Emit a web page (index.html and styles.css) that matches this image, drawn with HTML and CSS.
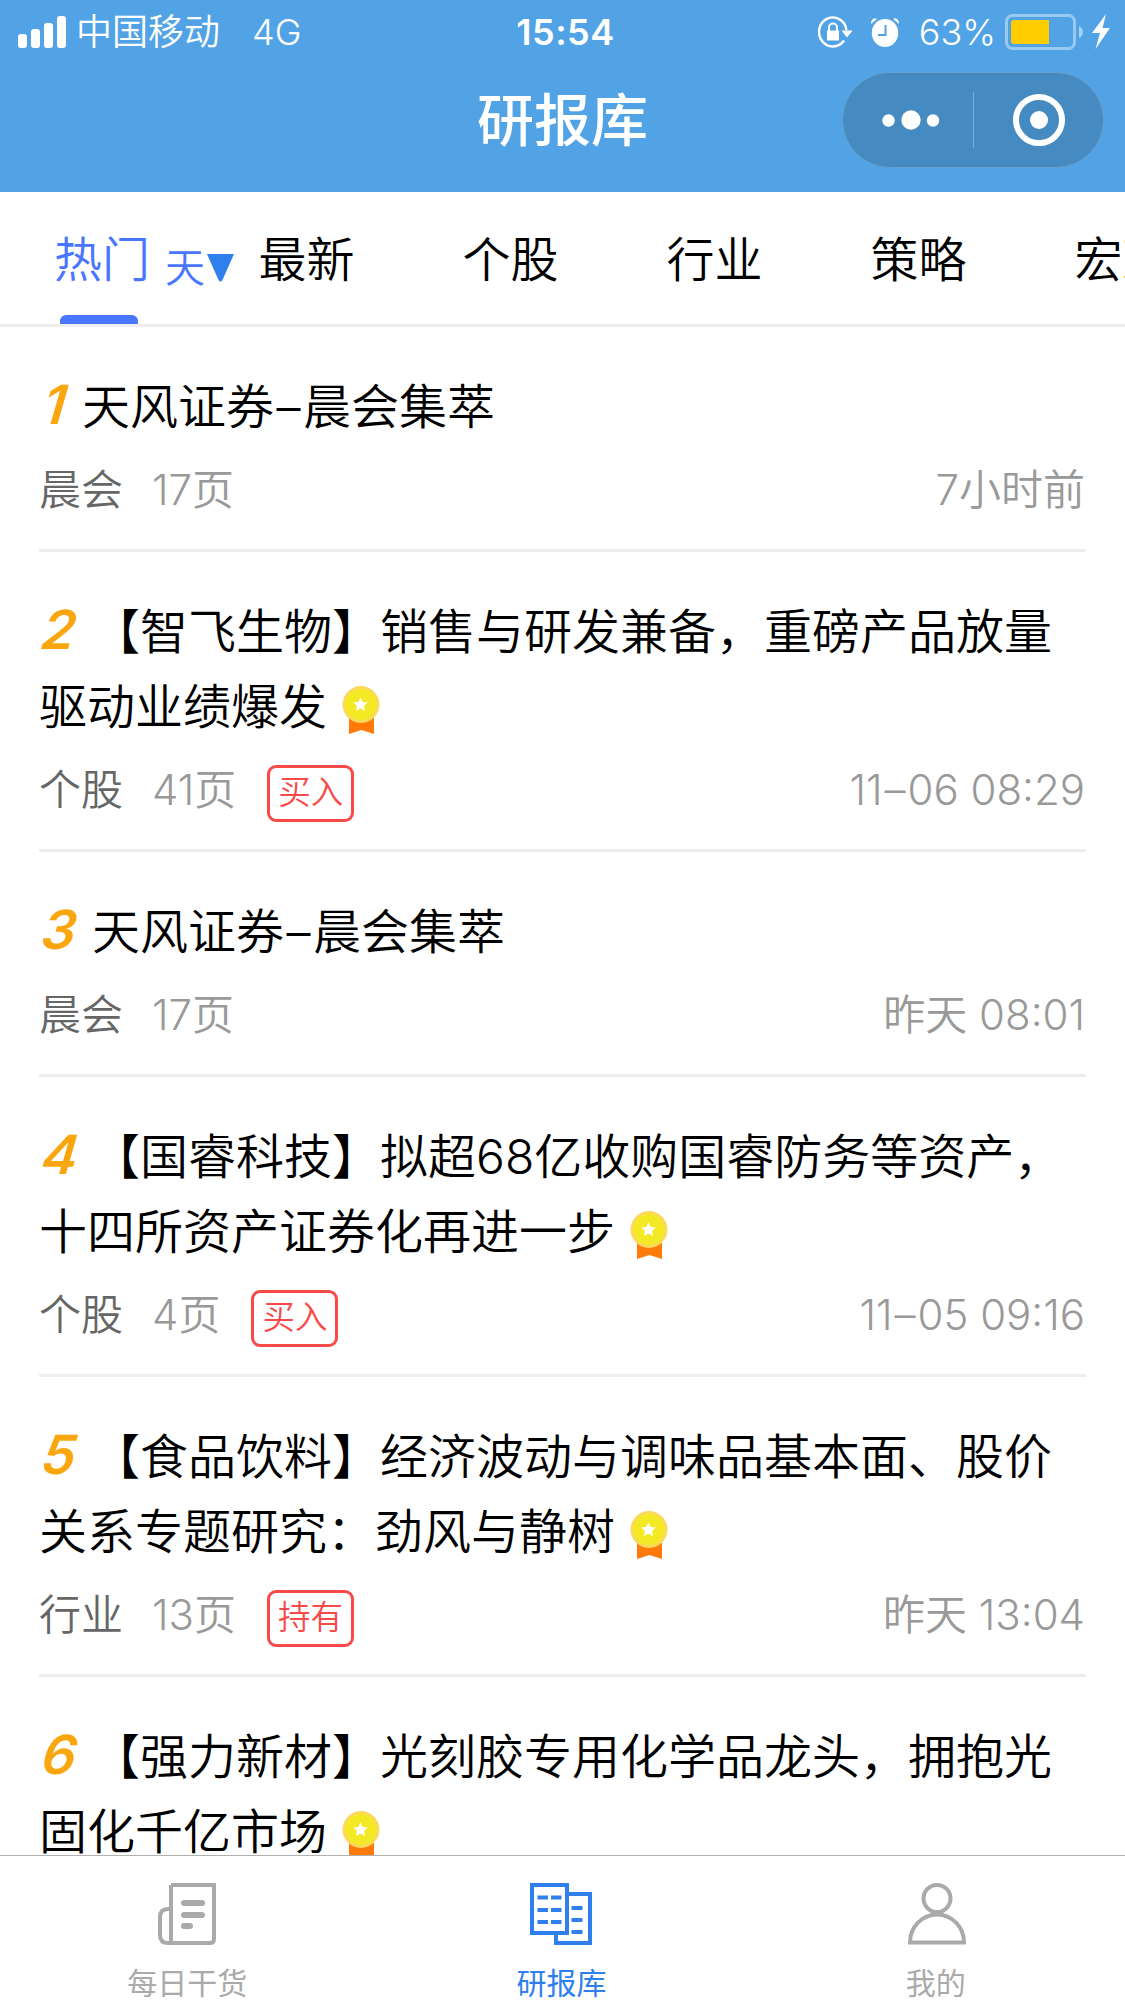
FILE: index.html
```html
<!DOCTYPE html>
<html lang="zh-CN">
<head>
<meta charset="utf-8">
<title>研报库</title>
<link rel="stylesheet" href="styles.css">
</head>
<body>
<svg class="defs" aria-hidden="true">
  <symbol id="medal" viewBox="0 0 38 48">
    <path d="M7 32h25v16l-12.500-4L7 48z" fill="#ff7a08"/>
    <circle cx="19" cy="18.500" r="18.500" fill="#fcd95c"/>
    <circle cx="19" cy="18.500" r="15.500" fill="#f3ea25"/>
    <path d="M18.500 11.500l2.200 4.500 5 .6-3.700 3.500 1 4.900-4.500-2.500-4.500 2.500 1-4.900-3.700-3.500 5-.6z" fill="#fff"/>
  </symbol>
</svg>
<header class="header">
  <div class="status">
    <div class="status-left">
      <svg class="signal" viewBox="0 0 48 32" fill="#fff"><rect y="18" width="9" height="14" rx="3"/><rect x="13" y="13" width="9" height="19" rx="3"/><rect x="26" y="7" width="9" height="25" rx="3"/><rect x="39" width="9" height="32" rx="3"/></svg>
      <span class="carrier">中国移动</span><span class="network">4G</span>
    </div>
    <div class="clock">15:54</div>
    <div class="status-right">
      <svg class="rotation" viewBox="0 0 34 32"><path d="M28.500 14A13.800 14.500 0 1 0 26 24.500" fill="none" stroke="#fff" stroke-width="2.400"/><path d="M23.500 14.500h11l-5.500 7z" fill="#fff"/><path d="M9 14.500h12v10H9z" fill="#fff"/><path d="M11 15v-3.500a4 4 0 0 1 8 0V15" fill="none" stroke="#fff" stroke-width="2"/></svg>
      <svg class="alarm" viewBox="0 0 28 30"><ellipse cx="14" cy="16" rx="13.200" ry="14" fill="#fff"/><path d="M0 7C0 2 3 0 6 2M28 7c0-5-3-7-6-5" fill="#fff"/><path d="M14.500 8v10H7" fill="none" stroke="#51a3e6" stroke-width="2"/></svg>
      <span class="percent">63%</span>
      <svg class="battery" viewBox="0 0 78 36"><rect x="1.500" y="1.500" width="68" height="33" rx="6" fill="none" stroke="#fff" stroke-opacity=".42" stroke-width="3"/><path d="M9 6h35v24H9q-3 0-3-3V9q0-3 3-3z" fill="#fc0"/><path d="M74 12q4 2 4 6t-4 6z" fill="#fff" fill-opacity=".5"/></svg>
      <svg class="bolt" viewBox="0 0 18 35" fill="#fff"><path d="M14 0L0 19h8L3.500 35 18 14h-7.500z"/></svg>
    </div>
  </div>
  <div class="navbar">
    <h1 class="nav-title">研报库</h1>
    <div class="capsule">
      <svg class="more" viewBox="0 0 58 20" fill="#fff"><circle cx="6.500" cy="10.500" r="6.200"/><circle cx="29" cy="10" r="9.700"/><circle cx="51" cy="10.500" r="6.200"/></svg>
      <i class="divider"></i>
      <svg class="target" viewBox="0 0 52 52"><circle cx="26" cy="26" r="23" fill="none" stroke="#fff" stroke-width="6"/><circle cx="26" cy="26" r="9" fill="#fff"/></svg>
    </div>
  </div>
</header>
<nav class="tabs">
  <div class="tab active">热门<span class="period">天<svg viewBox="0 0 27 28"><path d="M0 0h27L15.500 26q-2 3-4 0z" fill="#2f80ed"/></svg></span></div>
  <div class="tab">最新</div>
  <div class="tab">个股</div>
  <div class="tab">行业</div>
  <div class="tab">策略</div>
  <div class="tab">宏观</div>
</nav>
<main class="list">
  <article class="item">
    <h2 class="title"><em class="rank one">1</em>天风证券<span class="dash">–</span>晨会集萃</h2>
    <div class="meta"><span class="kind">晨会</span><span class="pages">17页</span><time>7小时前</time></div>
  </article>
  <article class="item">
    <h2 class="title"><em class="rank">2</em>【智飞生物】销售与研发兼备，重磅产品放量<br>驱动业绩爆发<svg class="medal"><use href="#medal"/></svg></h2>
    <div class="meta"><span class="kind">个股</span><span class="pages">41页</span><span class="badge">买入</span><time>11<span class="dash">–</span>06 08:29</time></div>
  </article>
  <article class="item">
    <h2 class="title"><em class="rank">3</em>天风证券<span class="dash">–</span>晨会集萃</h2>
    <div class="meta"><span class="kind">晨会</span><span class="pages">17页</span><time>昨天 08:01</time></div>
  </article>
  <article class="item">
    <h2 class="title"><em class="rank">4</em>【国睿科技】拟超68亿收购国睿防务等资产，<br>十四所资产证券化再进一步<svg class="medal"><use href="#medal"/></svg></h2>
    <div class="meta"><span class="kind">个股</span><span class="pages">4页</span><span class="badge">买入</span><time>11<span class="dash">–</span>05 09:16</time></div>
  </article>
  <article class="item">
    <h2 class="title"><em class="rank">5</em>【食品饮料】经济波动与调味品基本面、股价<br>关系专题研究：劲风与静树<svg class="medal"><use href="#medal"/></svg></h2>
    <div class="meta"><span class="kind">行业</span><span class="pages">13页</span><span class="badge">持有</span><time>昨天 13:04</time></div>
  </article>
  <article class="item">
    <h2 class="title"><em class="rank">6</em>【强力新材】光刻胶专用化学品龙头，拥抱光<br>固化千亿市场<svg class="medal"><use href="#medal"/></svg></h2>
  </article>
</main>
<footer class="tabbar">
  <div class="tabbar-item">
    <svg viewBox="0 0 62 62" fill="none" stroke="#aaa" stroke-width="4"><path d="M15 2h43v54q0 4-4 4H12q-8 0-8-8V34q0-8 8-8h3"/><path d="M15 2v58"/><path d="M28 20h18M28 32h18M28 43h6" stroke-width="6" stroke-linecap="round"/></svg>
    <span>每日干货</span>
  </div>
  <div class="tabbar-item current">
    <svg viewBox="0 0 62 62" fill="none" stroke="#2f80ed" stroke-width="4"><path d="M2 2h35v48H2zM37 11h23v49H26V50"/><path d="M7.500 14.500h25M7.500 27h25M7.500 39h25" stroke-dasharray="10.500 3"/><path d="M41.500 25h11M41.500 37h11M41.500 49h11"/></svg>
    <span>研报库</span>
  </div>
  <div class="tabbar-item">
    <svg viewBox="0 0 62 62" fill="none" stroke="#aaa" stroke-width="4"><circle cx="32" cy="15.500" r="13.500"/><path d="M5 59.500A27 28 0 0 1 59 59.500z"/></svg>
    <span>我的</span>
  </div>
</footer>
</body>
</html>
```
FILE: styles.css
```css
* { box-sizing: border-box; }
body {
  margin: 0;
  width: 1125px;
  height: 2001px;
  overflow: hidden;
  display: flex;
  flex-direction: column;
  background: #fff;
  color: #000;
  font-family: Inter, "Noto Sans CJK SC", sans-serif;
  font-weight: 350;
}
svg { display: block; flex: none; }
h1, h2 { margin: 0; font-weight: inherit; }
.defs { position: absolute; width: 0; height: 0; }

.header { flex: none; height: 192px; background: #51a3e6; color: #fff; }
.status {
  height: 62px;
  padding: 0 15px 0 18px;
  display: grid;
  grid-template-columns: 1fr auto 1fr;
  align-items: center;
  font-size: 36px;
  line-height: 62px;
}
.status-left, .status-right { display: flex; align-items: center; }
.status-left { padding-top: 1px; }
.status-right { justify-content: flex-end; }
.signal { width: 48px; height: 32px; margin-right: 10px; }
.network { margin-left: 32px; }
.clock { padding: 1px 0 0 3px; font-weight: 600; letter-spacing: 0.5px; }
.rotation { width: 34px; height: 32px; margin-right: 19px; }
.alarm { width: 28px; height: 30px; margin-right: 20px; }
.battery { width: 78px; height: 36px; margin: 0 9px; }
.bolt { width: 18px; height: 35px; }

.navbar {
  height: 116px;
  padding: 0 21px;
  display: grid;
  grid-template-columns: 1fr auto 1fr;
  align-items: center;
}
.nav-title { grid-column: 2; padding-top: 2px; font-size: 57px; font-weight: 500; line-height: 80px; }
.capsule {
  justify-self: end;
  width: 262px;
  height: 96px;
  border: 1px solid #679fcd;
  border-radius: 48px;
  background: #458bc2;
  display: grid;
  grid-template-columns: 1fr 1px 1fr;
  align-items: center;
}
.more { width: 58px; height: 20px; margin-left: 39px; }
.divider { height: 56px; background: #7aaed6; }
.target { width: 52px; height: 52px; margin-left: 39px; }

.tabs {
  flex: none;
  height: 135px;
  display: flex;
  border-bottom: 3px solid #eee;
  overflow: hidden;
}
.tab {
  position: relative;
  flex: none;
  width: 204px;
  font-size: 48px;
  line-height: 135px;
  text-align: center;
}
.tab:not(.active) { padding-left: 1px; }
.active { color: #4876ff; }
.active::after {
  content: "";
  position: absolute;
  left: 60px;
  bottom: 0;
  width: 78px;
  height: 9px;
  border-radius: 6px 6px 0 0;
  background: #4876ff;
}
.period {
  position: absolute;
  left: 165px;
  top: 8px;
  display: flex;
  align-items: center;
  font-size: 40px;
}
.period svg { width: 27px; height: 28px; margin-left: 2px; }

.list { flex: 1; min-height: 0; overflow: hidden; padding: 0 39px; }
.item { padding-top: 42px; border-bottom: 3px solid #eee; }
.title { font-size: 48px; line-height: 75px; white-space: nowrap; }
.title .dash { padding: 0 2.5px; }
.rank {
  display: inline-block;
  width: 53px;
  padding-left: 1px;
  font-size: 54px;
  font-weight: 600;
  line-height: 60px;
  color: #faa60f;
  transform: skewX(-7deg);
  transform-origin: 0 80%;
}
.one { width: 43px; padding-left: 2px; }
.medal { display: inline-block; width: 38px; height: 48px; margin-left: 15px; vertical-align: -10px; }
.meta {
  height: 105px;
  padding: 0 1px 0 0;
  display: flex;
  align-items: flex-start;
  font-size: 42px;
  line-height: 92px;
  color: #999;
}
.meta .dash { padding: 0 2px; }
.meta time { margin-left: auto; }
.kind { width: 113px; color: #666; }
.badge {
  margin: 21px 0 0 31px;
  padding: 0 8px;
  height: 57px;
  border: 3px solid #f94a4a;
  border-radius: 9px;
  font-size: 32.500px;
  line-height: 50px;
  color: #f94a4a;
}

.tabbar {
  flex: none;
  height: 146px;
  padding-right: 2px;
  border-top: 1px solid #b0b0b0;
  display: grid;
  grid-template-columns: repeat(3, 1fr);
  color: #aaa;
  font-weight: 400;
}
.tabbar-item {
  display: flex;
  flex-direction: column;
  align-items: center;
  padding-top: 27px;
  font-size: 30px;
  line-height: 40px;
}
.tabbar-item svg { width: 62px; height: 62px; margin-bottom: 18px; }
.current { color: #2f80ed; }
```
